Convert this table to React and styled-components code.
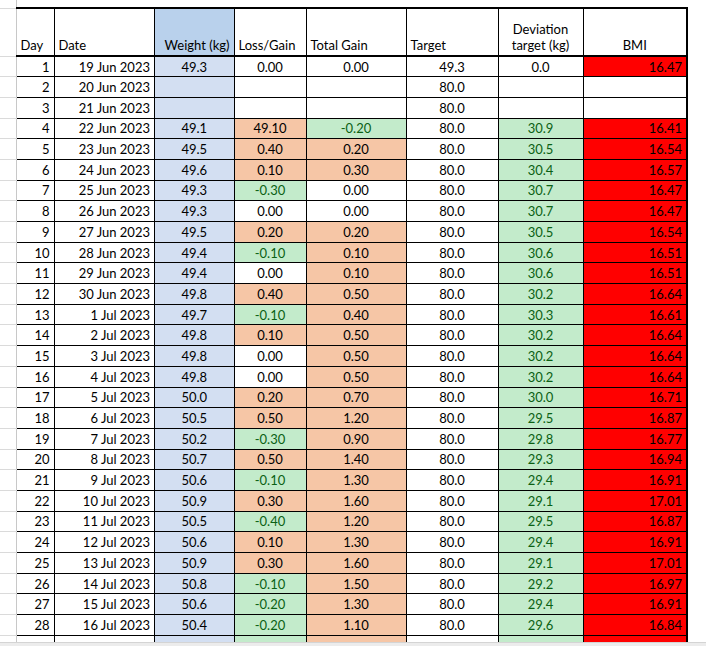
import React from "react";
import styled, { createGlobalStyle } from "styled-components";

const GlobalStyle = createGlobalStyle`
  html, body {
    margin: 0;
    padding: 0;
    background: #fff;
  }
  body {
    font-family: Lato, "Open Sans", sans-serif;
    color: #000;
  }
`;

const fills = {
  none: "#ffffff",
  blue: "#d3dff2",
  orange: "#f6c6a6",
  green: "#c3ebcb",
  red: "#ff0000",
};

const inks = {
  none: "#000",
  blue: "#000",
  orange: "#000",
  green: "#0b6114",
  red: "#000",
};

const Page = styled.div`
  display: flex;
  flex-direction: column;
  height: 646px;
  overflow: hidden;
`;

const Sheet = styled.div`
  flex: 1;
  overflow: hidden;
`;

const ScrollStrip = styled.div`
  height: 3px;
  border-top: 1px solid #d4d4d4;
  background: #ececec;
`;

const Grid = styled.table`
  border-collapse: collapse;
  table-layout: fixed;
  width: 687px;
  font-size: 13px;
  line-height: 16px;
`;

const Gutter = styled.td`
  padding: 0;
  border-right: 1px solid #c8c8c8;
  border-bottom: 1px solid #dadada;
`;

const Spacer = styled.td`
  height: 7px;
  padding: 0;
`;

const HeadRow = styled.tr`
  height: 48px;
`;

const HeadCell = styled.th`
  font-weight: normal;
  text-align: ${(p) => p.$align || "left"};
  vertical-align: bottom;
  padding: 0 4px 2px;
  border-top: 2px solid #000;
  border-bottom: 2px solid #000;
  border-left: 1px solid #000;
  border-right: ${(p) => (p.$last ? "2px" : "1px")} solid #000;
  background: ${(p) => (p.$fill ? "#b9d1ec" : "#fff")};
  white-space: ${(p) => (p.$wrap ? "normal" : "nowrap")};
  &:nth-child(2) {
    border-left: none;
  }
`;

const Row = styled.tr`
  height: 20.7px;
`;

const Cell = styled.td`
  padding: 0 4px;
  text-align: ${(p) => p.$align || "center"};
  white-space: nowrap;
  overflow: hidden;
  background: ${(p) => fills[p.$tone || "none"]};
  color: ${(p) => inks[p.$tone || "none"]};
  border: 1px solid #000;
  border-right-width: ${(p) => (p.$last ? "2px" : "1px")};
  &:nth-child(2) {
    border-left: none;
  }
`;

const raw = `1|19 Jun 2023|49.3|0.00|0.00|49.3|0.0|16.47
2|20 Jun 2023||||80.0||
3|21 Jun 2023||||80.0||
4|22 Jun 2023|49.1|49.10|-0.20|80.0|30.9|16.41
5|23 Jun 2023|49.5|0.40|0.20|80.0|30.5|16.54
6|24 Jun 2023|49.6|0.10|0.30|80.0|30.4|16.57
7|25 Jun 2023|49.3|-0.30|0.00|80.0|30.7|16.47
8|26 Jun 2023|49.3|0.00|0.00|80.0|30.7|16.47
9|27 Jun 2023|49.5|0.20|0.20|80.0|30.5|16.54
10|28 Jun 2023|49.4|-0.10|0.10|80.0|30.6|16.51
11|29 Jun 2023|49.4|0.00|0.10|80.0|30.6|16.51
12|30 Jun 2023|49.8|0.40|0.50|80.0|30.2|16.64
13|1 Jul 2023|49.7|-0.10|0.40|80.0|30.3|16.61
14|2 Jul 2023|49.8|0.10|0.50|80.0|30.2|16.64
15|3 Jul 2023|49.8|0.00|0.50|80.0|30.2|16.64
16|4 Jul 2023|49.8|0.00|0.50|80.0|30.2|16.64
17|5 Jul 2023|50.0|0.20|0.70|80.0|30.0|16.71
18|6 Jul 2023|50.5|0.50|1.20|80.0|29.5|16.87
19|7 Jul 2023|50.2|-0.30|0.90|80.0|29.8|16.77
20|8 Jul 2023|50.7|0.50|1.40|80.0|29.3|16.94
21|9 Jul 2023|50.6|-0.10|1.30|80.0|29.4|16.91
22|10 Jul 2023|50.9|0.30|1.60|80.0|29.1|17.01
23|11 Jul 2023|50.5|-0.40|1.20|80.0|29.5|16.87
24|12 Jul 2023|50.6|0.10|1.30|80.0|29.4|16.91
25|13 Jul 2023|50.9|0.30|1.60|80.0|29.1|17.01
26|14 Jul 2023|50.8|-0.10|1.50|80.0|29.2|16.97
27|15 Jul 2023|50.6|-0.20|1.30|80.0|29.4|16.91
28|16 Jul 2023|50.4|-0.20|1.10|80.0|29.6|16.84`;

const rows = raw.split("\n").map((line) => line.split("|"));

function signTone(v) {
  if (v === "") return "none";
  const n = parseFloat(v);
  if (n > 0) return "orange";
  if (n < 0) return "green";
  return "none";
}

const widths = [16, 38, 100.5, 79.5, 72, 100, 92, 85, 104];

export default function App() {
  return (
    <Page>
      <GlobalStyle />
      <Sheet>
        <Grid>
          <colgroup>
            {widths.map((w, i) => (
              <col key={i} style={{ width: w }} />
            ))}
          </colgroup>
          <tbody>
            <tr>
              <Gutter />
              <Spacer colSpan={8} />
            </tr>
            <HeadRow>
              <Gutter />
              <HeadCell>Day</HeadCell>
              <HeadCell>Date</HeadCell>
              <HeadCell $fill $align="right">Weight (kg)</HeadCell>
              <HeadCell>Loss/Gain</HeadCell>
              <HeadCell>Total Gain</HeadCell>
              <HeadCell>Target</HeadCell>
              <HeadCell $align="center" $wrap>Deviation target (kg)</HeadCell>
              <HeadCell $align="center" $last>BMI</HeadCell>
            </HeadRow>
            {rows.map(([day, date, weight, loss, total, target, dev, bmi]) => (
              <Row key={day}>
                <Gutter />
                <Cell $align="right">{day}</Cell>
                <Cell $align="right">{date}</Cell>
                <Cell $tone="blue">{weight}</Cell>
                <Cell $tone={signTone(loss)}>{loss}</Cell>
                <Cell $tone={signTone(total)}>{total}</Cell>
                <Cell>{target}</Cell>
                <Cell $tone={dev && parseFloat(dev) > 0 ? "green" : "none"}>{dev}</Cell>
                <Cell $align="right" $tone={bmi ? "red" : "none"} $last>
                  {bmi}
                </Cell>
              </Row>
            ))}
            <Row>
              <Gutter />
              <Cell />
              <Cell />
              <Cell $tone="blue" />
              <Cell $tone="green" />
              <Cell $tone="orange" />
              <Cell />
              <Cell $tone="green" />
              <Cell $tone="red" $last />
            </Row>
          </tbody>
        </Grid>
      </Sheet>
      <ScrollStrip />
    </Page>
  );
}
